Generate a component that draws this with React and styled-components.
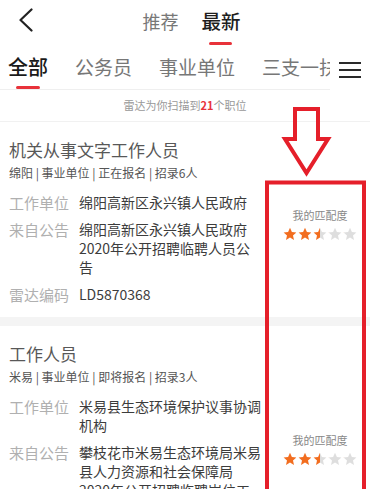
import React from "react";
import styled, { createGlobalStyle } from "styled-components";

const Global = createGlobalStyle`
  html, body { margin: 0; padding: 0; background: #fff; }
  body { font-family: "Noto Sans CJK SC", "Noto Sans", sans-serif; }
  * { box-sizing: border-box; }
`;

const Page = styled.div`
  position: relative;
  width: 370px;
  height: 489px;
  overflow: hidden;
  background: #fff;
`;

const TopBar = styled.div`
  display: grid;
  grid-template-columns: 1fr auto 1fr;
  align-items: start;
  height: 45px;
  padding: 8px 5px 0 18px;
`;

const BackBtn = styled.div`
  display: flex;
  align-items: flex-start;
  height: 24px;
`;

const TopTabs = styled.div`
  display: flex;
  gap: 23px;
`;

const TopTab = styled.div`
  display: flex;
  flex-direction: column;
  align-items: center;
  font-size: ${(p) => (p.$active ? "19.5px" : "18px")};
  line-height: 26px;
  color: ${(p) => (p.$active ? "#1e1e1e" : "#777")};
  font-weight: ${(p) => (p.$active ? 500 : 400)};
`;

const TopLine = styled.div`
  width: 23px;
  height: 3px;
  margin-top: 8px;
  border-radius: 2px;
  background: ${(p) => (p.$active ? "#e8323a" : "transparent")};
`;

const TabRow = styled.div`
  display: flex;
  height: 45px;
`;

const Scroller = styled.div`
  width: 330px;
  display: flex;
  gap: 27px;
  padding: 9px 0 0 8px;
  overflow: hidden;
  border-bottom: 1px solid #efefef;
`;

const Tab = styled.div`
  flex: none;
  display: flex;
  flex-direction: column;
  align-items: center;
  white-space: nowrap;
  font-size: ${(p) => (p.$active ? "20px" : "19px")};
  line-height: 26px;
  color: ${(p) => (p.$active ? "#1a1a1a" : "#777")};
  font-weight: ${(p) => (p.$active ? 500 : 400)};
`;

const TabLine = styled.div`
  width: 24px;
  height: 3px;
  margin-top: 6px;
  border-radius: 2px;
  background: ${(p) => (p.$active ? "#e8323a" : "transparent")};
`;

const MenuBtn = styled.div`
  flex: 1;
  display: flex;
  flex-direction: column;
  align-items: center;
  gap: 5px;
  padding-top: 17px;
  span {
    display: block;
    width: 22px;
    height: 2px;
    background: #2a2a2a;
  }
`;

const Notice = styled.div`
  height: 32px;
  line-height: 31px;
  text-align: center;
  font-size: 11px;
  color: #999;
  border-bottom: 1px solid #f1f1f1;
  b {
    color: #e8323a;
    font-weight: 600;
  }
`;

const Card = styled.div`
  display: flex;
  padding: 15.5px 0 13.5px 9px;
  border-bottom: 9px solid #f4f4f4;
`;

const Left = styled.div`
  width: 253px;
  flex: none;
`;

const Title = styled.div`
  font-size: 17px;
  line-height: 24px;
  color: #585858;
`;

const Meta = styled.div`
  margin-top: 3.5px;
  font-size: 12px;
  line-height: 16px;
  color: #555;
  font-weight: 400;
`;

const Rows = styled.div`
  margin-top: 11.5px;
  display: flex;
  flex-direction: column;
  gap: 8px;
`;

const Row = styled.div`
  display: grid;
  grid-template-columns: 70px 183px;
  line-height: 19px;
`;

const Label = styled.div`
  font-size: 15px;
  color: #b0b0b0;
`;

const Value = styled.div`
  font-size: 14px;
  color: #3c3c3c;
`;

const Right = styled.div`
  flex: 1;
  display: flex;
  flex-direction: column;
  align-items: center;
  padding-top: ${(p) => p.$offset}px;
  padding-left: 8px;
`;

const MatchLabel = styled.div`
  font-size: 11px;
  line-height: 16px;
  color: #888;
`;

const Stars = styled.div`
  display: flex;
  gap: 1px;
  margin-top: 4px;
`;

const Faint = styled.div`
  margin-top: 20px;
  margin-right: 26px;
`;

const Overlay = styled.svg`
  position: absolute;
  left: 0;
  top: 0;
  pointer-events: none;
`;

const STAR = "M7 0.8 L8.9 4.9 L13.4 5.4 L10 8.4 L11 12.9 L7 10.6 L3 12.9 L4 8.4 L0.6 5.4 L5.1 4.9 Z";

function Star({ fill, id }) {
  return (
    <svg width="14" height="14" viewBox="0 0 14 14">
      <defs>
        <linearGradient id={id} x1="0" x2="1" y1="0" y2="0">
          <stop offset={fill} stopColor="#f26d1f" />
          <stop offset={fill} stopColor="#dedede" />
        </linearGradient>
      </defs>
      <path d={STAR} fill={`url(#${id})`} />
    </svg>
  );
}

function Rating({ value, id }) {
  return (
    <Stars>
      {[0, 1, 2, 3, 4].map((i) => {
        const f = Math.max(0, Math.min(1, value - i));
        return <Star key={i} fill={f} id={`${id}-${i}`} />;
      })}
    </Stars>
  );
}

const jobs = [
  {
    title: "机关从事文字工作人员",
    meta: "绵阳 | 事业单位 | 正在报名 | 招录6人",
    rows: [
      ["工作单位", "绵阳高新区永兴镇人民政府"],
      ["来自公告", "绵阳高新区永兴镇人民政府2020年公开招聘临聘人员公告"],
      ["雷达编码", "LD5870368"],
    ],
    offset: 69.5,
    rating: 2.5,
  },
  {
    title: "工作人员",
    meta: "米易 | 事业单位 | 即将报名 | 招录3人",
    rows: [
      ["工作单位", "米易县生态环境保护议事协调机构"],
      ["来自公告", "攀枝花市米易生态环境局米易县人力资源和社会保障局2020年公开招聘临聘岗位工作人员公告"],
    ],
    offset: 90.5,
    rating: 2.5,
    faint: true,
  },
];

export default function App() {
  return (
    <Page>
      <Global />
      <TopBar>
        <BackBtn>
          <svg width="16" height="24" viewBox="0 0 16 24">
            <polyline points="13.5,1.5 2.5,12 13.5,22.5" fill="none" stroke="#222" strokeWidth="2.2" strokeLinecap="round" strokeLinejoin="round" />
          </svg>
        </BackBtn>
        <TopTabs>
          <TopTab>
            推荐
            <TopLine />
          </TopTab>
          <TopTab $active>
            最新
            <TopLine $active />
          </TopTab>
        </TopTabs>
        <div />
      </TopBar>

      <TabRow>
        <Scroller>
          {["全部", "公务员", "事业单位", "三支一扶", "医疗卫生"].map((t, i) => (
            <Tab key={t} $active={i === 0}>
              {t}
              <TabLine $active={i === 0} />
            </Tab>
          ))}
        </Scroller>
        <MenuBtn>
          <span />
          <span />
          <span />
        </MenuBtn>
      </TabRow>

      <Notice>
        雷达为你扫描到<b>21</b>个职位
      </Notice>

      {jobs.map((j, k) => (
        <Card key={k}>
          <Left>
            <Title>{j.title}</Title>
            <Meta>{j.meta}</Meta>
            <Rows>
              {j.rows.map(([l, v]) => (
                <Row key={l}>
                  <Label>{l}</Label>
                  <Value>{v}</Value>
                </Row>
              ))}
            </Rows>
          </Left>
          <Right $offset={j.offset}>
            <MatchLabel>我的匹配度</MatchLabel>
            <Rating value={j.rating} id={`r${k}`} />
            {j.faint && (
              <Faint>
                <svg width="20" height="12" viewBox="0 0 20 12">
                  <path d="M2 12 C2 5 9 5 9 10 C9 3 18 3 18 12" fill="none" stroke="#e4e4e4" strokeWidth="1.5" />
                </svg>
              </Faint>
            )}
          </Right>
        </Card>
      ))}

      <Overlay width="370" height="489" viewBox="0 0 370 489">
        <polygon
          points="295,109 318,109 318,139 328,139 306.5,173 285,139 295,139"
          fill="none"
          stroke="#e51f2a"
          strokeWidth="4"
          strokeLinejoin="miter"
        />
        <rect x="267" y="182.5" width="97" height="330" fill="none" stroke="#e51f2a" strokeWidth="4" />
      </Overlay>
    </Page>
  );
}
